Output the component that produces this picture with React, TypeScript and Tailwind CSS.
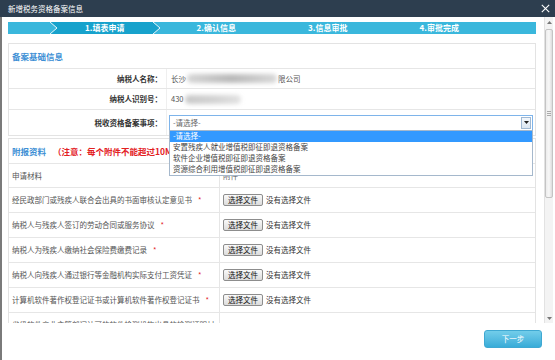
import React from "react";

const rows = [
  "经民政部门或残疾人联合会出具的书面审核认定意见书",
  "纳税人与残疾人签订的劳动合同或服务协议",
  "纳税人为残疾人缴纳社会保险费缴费记录",
  "纳税人向残疾人通过银行等金融机构实际支付工资凭证",
  "计算机软件著作权登记证书或计算机软件著作权登记证书",
  "省级软件产业主管部门认可的软件检测机构出具的检测证明材料",
];

const options = [
  "安置残疾人就业增值税即征即退资格备案",
  "软件企业增值税即征即退资格备案",
  "资源综合利用增值税即征即退资格备案",
];

function FileButton() {
  return (
    <div className="flex items-center">
      <span className="flex h-[12px] w-[40px] items-center justify-center rounded-[2px] border border-[#8d8d8d] bg-gradient-to-b from-[#fafafa] to-[#dcdcdc] text-[7.5px] leading-none text-[#111]">
        选择文件
      </span>
      <span className="ml-[3px] text-[7.5px] leading-none text-[#333]">没有选择文件</span>
    </div>
  );
}

export default function App() {
  return (
    <div className="relative h-[360px] w-[555px] overflow-hidden bg-white font-['Noto_Sans_CJK_SC','Noto_Sans',sans-serif]">
      {/* title bar */}
      <div className="flex h-[17px] items-center justify-between bg-[#2d3e4f] pl-[8px] pr-[5px]">
        <span className="text-[7.5px] leading-none text-white">新增税务资格备案信息</span>
        <svg width="9" height="9" viewBox="0 0 9 9">
          <path d="M0.8 0.8 L8.2 8.2 M8.2 0.8 L0.8 8.2" stroke="#ffffff" strokeWidth="1.1" />
        </svg>
      </div>

      <div className="flex h-[343px] flex-col border-l-2 border-[#7a7a7a]">
        {/* scroll area */}
        <div className="flex h-[306px]">
          <div className="flex-1 overflow-hidden pl-[6px] pr-[8px] pt-[5px]">
            {/* step bar */}
            <div className="relative h-[12px] w-[528px] bg-[#3ab7dc]">
              <svg width="528" height="12" viewBox="0 0 528 12" className="absolute left-0 top-0">
                <polygon points="42,0 49,6 42,12 145,12 152,6 145,0" fill="#17a2cc" />
                <polyline points="42,0 49,6 42,12" fill="none" stroke="#ffffff" strokeWidth="0.9" />
                <polyline points="145,0 152,6 145,12" fill="none" stroke="#ffffff" strokeWidth="0.9" />
              </svg>
              <div className="relative grid h-full grid-cols-4 px-[41px] text-[8px] font-bold leading-none text-white">
                <span className="flex items-center justify-center">1.填表申请</span>
                <span className="flex items-center justify-center">2.确认信息</span>
                <span className="flex items-center justify-center">3.信息审批</span>
                <span className="flex items-center justify-center">4.审批完成</span>
              </div>
            </div>

            {/* section 1 */}
            <div className="mt-[9px] border border-[#e3e3e3]">
              <div className="flex h-[24px] items-center pl-[3px] text-[8.5px] font-bold leading-none text-[#3d8fd5]">
                备案基础信息
              </div>
              <div className="flex h-[20px] border-t border-[#e6e6e6]">
                <div className="flex w-[158px] items-center justify-end border-r border-[#efefef] pr-[4px] text-[7.5px] font-bold leading-none text-[#333]">
                  纳税人名称：
                </div>
                <div className="flex items-center pl-[4px] text-[7.5px] leading-none text-[#555]">
                  <span>长沙</span>
                  <span className="mx-[1px] inline-block h-[9px] w-[90px] rounded-full bg-gradient-to-r from-[#d6d6d6] via-[#b9b9b9] to-[#d8d8d8] blur-[2px]" />
                  <span>限公司</span>
                </div>
              </div>
              <div className="flex h-[21px] border-t border-[#e6e6e6]">
                <div className="flex w-[158px] items-center justify-end border-r border-[#efefef] pr-[4px] text-[7.5px] font-bold leading-none text-[#333]">
                  纳税人识别号：
                </div>
                <div className="flex items-center pl-[4px] text-[7.5px] leading-none text-[#555]">
                  <span>430</span>
                  <span className="ml-[1px] inline-block h-[9px] w-[56px] rounded-full bg-gradient-to-r from-[#c9c9c9] via-[#d2d2d2] to-[#e2e2e2] blur-[2px]" />
                </div>
              </div>
              <div className="flex h-[26px] border-t border-[#e6e6e6]">
                <div className="flex w-[158px] items-center justify-end border-r border-[#efefef] pr-[4px] text-[7.5px] font-bold leading-none text-[#333]">
                  税收资格备案事项：
                </div>
                <div className="flex items-center pl-[2px]">
                  <div className="relative flex h-[16px] w-[364px] items-center justify-between border border-[#7eb4ea] bg-white pl-[3px] pr-[1px]">
                    <span className="text-[7.5px] leading-none text-[#666]">-请选择-</span>
                    <span className="flex h-[12px] w-[10px] items-center justify-center border border-[#9fb8d3] bg-gradient-to-b from-[#f4f8fc] to-[#dbe6f1]">
                      <svg width="5" height="3" viewBox="0 0 5 3">
                        <polygon points="0,0 5,0 2.5,3" fill="#222" />
                      </svg>
                    </span>
                    {/* dropdown list */}
                    <div className="absolute left-[-1px] top-full z-10 w-[364px] border border-[#a5b8cc] bg-white text-[7.5px] leading-none">
                      <div className="flex h-[11px] items-center bg-[#3399ff] pl-[3px] text-white">-请选择-</div>
                      {options.map((o) => (
                        <div key={o} className="flex h-[11px] items-center pl-[3px] text-[#444]">
                          {o}
                        </div>
                      ))}
                    </div>
                  </div>
                </div>
              </div>
            </div>

            {/* section 2 */}
            <div className="mt-[2px] border border-[#e3e3e3]">
              <div className="flex h-[24px] items-center pl-[3px] leading-none">
                <span className="text-[8.5px] font-bold text-[#3d8fd5]">附报资料</span>
                <span className="ml-[7px] text-[8.5px] font-bold text-[#e3211f]">（注意：每个附件不能超过10M）</span>
              </div>
              <div className="flex h-[24px] border-t border-[#e6e6e6] text-[7.5px] leading-none text-[#555]">
                <div className="flex w-[211px] items-center border-r border-[#e6e6e6] pl-[3px]">申请材料</div>
                <div className="flex items-center pl-[3px]">附件</div>
              </div>
              {rows.map((r) => (
                <div key={r} className="flex min-h-[25px] border-t border-[#e6e6e6] text-[7.5px] leading-[10px] text-[#555]">
                  <div className="flex w-[211px] items-center border-r border-[#e6e6e6] py-[7px] pl-[3px] pr-[2px]">
                    <span>
                      {r}
                      <span className="ml-[6px] text-[#e3211f]">*</span>
                    </span>
                  </div>
                  <div className="flex items-center pl-[3px]">
                    <FileButton />
                  </div>
                </div>
              ))}
            </div>
          </div>

          {/* scrollbar */}
          <div className="mr-[2px] flex w-[9px] flex-col border-l border-[#e2e2e2] bg-[#f3f3f3]">
            <div className="flex h-[10px] items-center justify-center">
              <svg width="5" height="3" viewBox="0 0 5 3">
                <polygon points="0,3 5,3 2.5,0" fill="#777" />
              </svg>
            </div>
            <div className="flex-1">
              <div className="mx-auto mt-[2px] flex h-[169px] w-[8px] flex-col items-center justify-center gap-[1px] rounded-[2px] border border-[#c4c4c4] bg-gradient-to-r from-[#ececec] via-[#f8f8f8] to-[#dcdcdc]">
                <span className="h-[1px] w-[4px] bg-[#aaa]" />
                <span className="h-[1px] w-[4px] bg-[#aaa]" />
                <span className="h-[1px] w-[4px] bg-[#aaa]" />
              </div>
            </div>
            <div className="flex h-[10px] items-center justify-center">
              <svg width="5" height="3" viewBox="0 0 5 3">
                <polygon points="0,0 5,0 2.5,3" fill="#777" />
              </svg>
            </div>
          </div>
        </div>

        {/* footer */}
        <div className="flex flex-1 items-start justify-end pr-[13px] pt-[7px]">
          <div className="flex h-[18px] w-[58px] items-center justify-center rounded-[3px] border border-[#3fa8d2] bg-gradient-to-b from-[#72cdea] to-[#37acd8] text-[7.5px] leading-none text-white">
            下一步
          </div>
        </div>
      </div>
    </div>
  );
}
